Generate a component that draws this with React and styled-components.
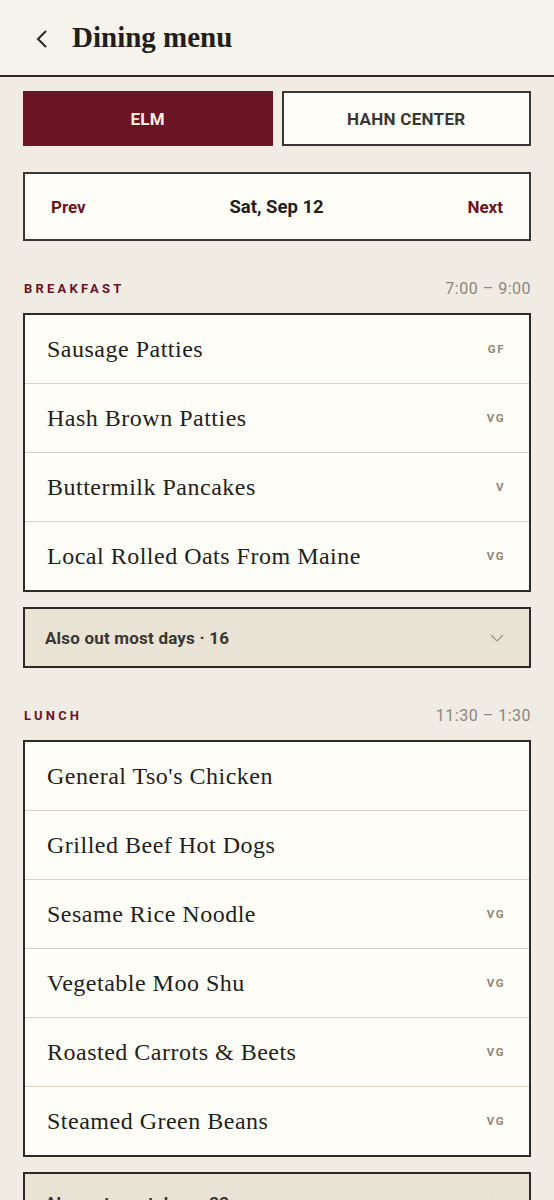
import { useState } from "react";
import styled, { createGlobalStyle } from "styled-components";

const GlobalStyle = createGlobalStyle`
  html, body {
    margin: 0;
    padding: 0;
    background: #f0ece3;
  }
  * {
    box-sizing: border-box;
  }
`;

const meals = [
  {
    name: "Breakfast",
    time: "7:00 – 9:00",
    items: [
      { name: "Sausage Patties", tag: "GF" },
      { name: "Hash Brown Patties", tag: "VG" },
      { name: "Buttermilk Pancakes", tag: "V" },
      { name: "Local Rolled Oats From Maine", tag: "VG" },
    ],
    extra: 16,
  },
  {
    name: "Lunch",
    time: "11:30 – 1:30",
    items: [
      { name: "General Tso's Chicken" },
      { name: "Grilled Beef Hot Dogs" },
      { name: "Sesame Rice Noodle", tag: "VG" },
      { name: "Vegetable Moo Shu", tag: "VG" },
      { name: "Roasted Carrots & Beets", tag: "VG" },
      { name: "Steamed Green Beans", tag: "VG" },
    ],
    extra: 33,
  },
];

function Chevron({ dir }) {
  return dir === "left" ? (
    <svg width="12" height="20" viewBox="0 0 12 20" fill="none">
      <path d="M10 2 L2 10 L10 18" stroke="#2a2622" strokeWidth="2" />
    </svg>
  ) : (
    <svg width="14" height="8" viewBox="0 0 14 8" fill="none">
      <path d="M1 1 L7 7 L13 1" stroke="#9a948a" strokeWidth="1.2" />
    </svg>
  );
}

function App() {
  const [hall, setHall] = useState("elm");

  return (
    <>
      <GlobalStyle />
      <Page>
        <Header>
          <BackButton>
            <Chevron dir="left" />
          </BackButton>
          <Title>Dining menu</Title>
        </Header>

        <Body>
          <Tabs>
            <Tab $active={hall === "elm"} onClick={() => setHall("elm")}>
              ELM
            </Tab>
            <Tab $active={hall === "hahn"} onClick={() => setHall("hahn")}>
              HAHN CENTER
            </Tab>
          </Tabs>

          <DateNav>
            <NavLink>Prev</NavLink>
            <DateLabel>Sat, Sep 12</DateLabel>
            <NavLink>Next</NavLink>
          </DateNav>

          {meals.map((meal) => (
            <Section key={meal.name}>
              <SectionHead>
                <MealName>{meal.name}</MealName>
                <MealTime>{meal.time}</MealTime>
              </SectionHead>
              <List>
                {meal.items.map((item) => (
                  <Row key={item.name}>
                    <Dish>{item.name}</Dish>
                    {item.tag ? <Tag>{item.tag}</Tag> : null}
                  </Row>
                ))}
              </List>
              <Extra>
                <span>Also out most days · {meal.extra}</span>
                <Chevron dir="down" />
              </Extra>
            </Section>
          ))}
        </Body>
      </Page>
    </>
  );
}

const sans = `"Roboto", "Liberation Sans", sans-serif`;
const serif = `"Liberation Serif", "DejaVu Serif", serif`;

const Page = styled.div`
  width: 554px;
  min-height: 1200px;
  background: #f0ece3;
`;

const Header = styled.div`
  height: 77px;
  display: flex;
  align-items: center;
  gap: 24px;
  padding: 0 0 0 36px;
  background: #f6f3ec;
  border-bottom: 2px solid #2a2622;
`;

const BackButton = styled.div`
  display: flex;
  align-items: center;
  padding-top: 2px;
`;

const Title = styled.h1`
  margin: 0;
  font-family: ${serif};
  font-size: 29px;
  font-weight: 700;
  color: #221e1a;
`;

const Body = styled.div`
  padding: 14px 23px 0;
`;

const Tabs = styled.div`
  display: grid;
  grid-template-columns: 1fr 1fr;
  gap: 9px;
`;

const Tab = styled.button`
  height: 55px;
  border: 2px solid ${(p) => (p.$active ? "#6b1424" : "#3a3632")};
  background: ${(p) => (p.$active ? "#6b1424" : "#fffdf8")};
  color: ${(p) => (p.$active ? "#f6efe6" : "#3a3632")};
  font-family: ${sans};
  font-size: 17px;
  font-weight: 700;
  letter-spacing: 0.3px;
  cursor: pointer;
`;

const DateNav = styled.div`
  margin-top: 26px;
  height: 69px;
  display: flex;
  align-items: center;
  justify-content: space-between;
  padding: 0 26px;
  background: #fffdf8;
  border: 2px solid #3a3632;
`;

const NavLink = styled.span`
  font-family: ${sans};
  font-size: 17px;
  font-weight: 700;
  color: #6b1424;
`;

const DateLabel = styled.span`
  font-family: ${sans};
  font-size: 18.5px;
  font-weight: 700;
  color: #221e1a;
`;

const Section = styled.section`
  margin-top: 37px;
`;

const SectionHead = styled.div`
  display: flex;
  justify-content: space-between;
  align-items: center;
  height: 20px;
  margin-bottom: 15px;
  padding-left: 1px;
`;

const MealName = styled.span`
  font-family: ${sans};
  font-size: 13px;
  font-weight: 700;
  letter-spacing: 3.2px;
  text-transform: uppercase;
  color: #6b1424;
`;

const MealTime = styled.span`
  font-family: ${sans};
  font-size: 16px;
  letter-spacing: 0.5px;
  color: #8d877e;
`;

const List = styled.div`
  background: #fffdf8;
  border: 2px solid #2e2a26;
`;

const Row = styled.div`
  height: 68px;
  display: flex;
  align-items: center;
  justify-content: space-between;
  padding: 0 24px 0 22px;
  & + & {
    height: 69px;
    border-top: 1px solid #d9d1c3;
  }
`;

const Dish = styled.span`
  font-family: ${serif};
  font-size: 24px;
  letter-spacing: 0.5px;
  color: #221e1a;
`;

const Tag = styled.span`
  font-family: ${sans};
  font-size: 11.5px;
  font-weight: 700;
  letter-spacing: 1.5px;
  color: #8d877e;
`;

const Extra = styled.div`
  margin-top: 15px;
  height: 61px;
  display: flex;
  align-items: center;
  justify-content: space-between;
  padding: 0 25px 0 20px;
  background: #e9e3d6;
  border: 2px solid #2e2a26;
  font-family: ${sans};
  font-size: 17px;
  font-weight: 700;
  letter-spacing: 0.2px;
  color: #3a3632;
`;

export default App;
